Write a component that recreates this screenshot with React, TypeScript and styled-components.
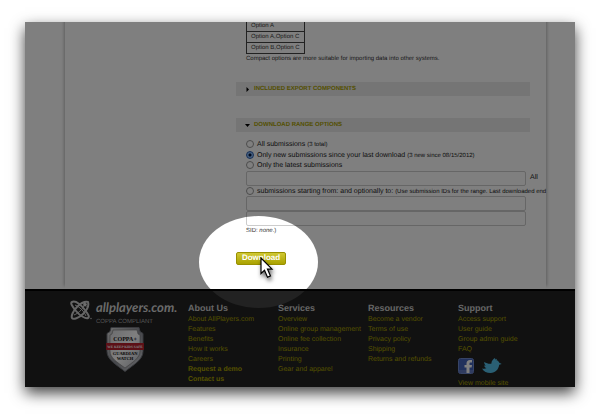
import React from "react";
import styled, { createGlobalStyle } from "styled-components";

const GlobalStyle = createGlobalStyle`
  * { box-sizing: border-box; }
  body {
    margin: 0;
    background: #fff;
    color: #333;
    font: 7px/10px "Liberation Sans", Arial, sans-serif;
    text-rendering: geometricPrecision;
  }
`;

const Stage = styled.div`
  padding: 22px 25px 33px;
`;

const Screen = styled.div`
  position: relative;
  overflow: hidden;
  background: #fff;
  box-shadow: 0 6px 14px 0 rgba(0, 0, 0, 0.75);
`;

const Page = styled.main`
  margin: 0 29px 0 40px;
  padding: 0 16px 24px 171px;
  box-shadow: 0 -4px 3px 1px rgba(0, 0, 0, 0.25);
`;

const Body = styled.div`
  padding: 0 0 0 10px;
`;

const OptionTable = styled.table`
  border-collapse: collapse;
  color: #333;
  font-size: 6px;
  line-height: 8px;
`;

const OptionCell = styled.td<{ $first?: boolean }>`
  height: ${(p) => (p.$first ? "9px" : "11px")};
  padding: 0 4px;
  border: 1px solid #444;
  border-top-width: ${(p) => (p.$first ? "0" : "1px")};
  white-space: nowrap;
`;

const Hint = styled.p`
  margin: 0;
  font-size: 6px;
  line-height: 10px;
`;

const SectionToggle = styled.button<{ $gap: number }>`
  display: flex;
  align-items: center;
  gap: 4px;
  width: 100%;
  height: 14px;
  margin-top: ${(p) => p.$gap}px;
  padding: 1px 9px 0;
  border: 0;
  background: #eaeaea;
  color: #a8a000;
  font: bold 6px/14px "Liberation Sans", Arial, sans-serif;
  text-rendering: inherit;
  text-transform: uppercase;
`;

const Options = styled.div`
  display: flex;
  flex-direction: column;
  padding: 7px 0 0 10px;
`;

const Choice = styled.div<{ $tall?: boolean }>`
  display: flex;
  align-items: center;
  gap: 3px;
  height: ${(p) => (p.$tall ? "10px" : "11px")};
  color: #222;
  white-space: nowrap;
`;

const ChoiceLabel = styled.label`
  padding-top: 2px;
`;

const Radio = styled.input`
  appearance: none;
  flex: none;
  width: 8px;
  height: 8px;
  margin: 0;
  border: 1px solid #999;
  border-radius: 50%;
  background: #fff;
  &:checked {
    border-color: #2d5fae;
    background: radial-gradient(circle, #00143c 0 1px, #8fc0ff 2px 3px);
  }
`;

const Note = styled.small`
  font-size: 6px;
`;

const FieldRow = styled.div`
  display: flex;
  align-items: center;
  gap: 4px;
  margin-right: -8px;
`;

const Field = styled.input<{ $inset?: boolean }>`
  display: block;
  flex: 1;
  min-width: 0;
  height: 15px;
  margin-right: ${(p) => (p.$inset ? "4px" : "0")};
  padding: 0 3px;
  border: 1px solid #ccc;
  border-radius: 2px;
  background: #fff;
  font: inherit;
`;

const Stack = styled.div`
  display: grid;
`;

const AfterField = styled.label`
  width: 8px;
  color: #222;
`;

const Download = styled.button`
  display: block;
  width: 50px;
  height: 13px;
  margin-top: 16px;
  padding: 0;
  border: 1px solid #989000;
  border-radius: 2px;
  background: linear-gradient(#d0c832, #aaa200);
  color: #fff;
  font: bold 8px/10px "Liberation Sans", Arial, sans-serif;
  text-rendering: inherit;
`;

const Footer = styled.footer`
  display: grid;
  grid-template-columns: 118px repeat(3, 90px) 1fr;
  height: 98px;
  padding: 9px 0 0 45px;
  border-top: 2px solid #000;
  background: #222;
`;

const Brand = styled.div`
  display: grid;
  grid-template-columns: 26px 1fr;
  align-content: start;
`;

const BrandName = styled.div`
  height: 17px;
  color: #d4d4d4;
  font: italic bold 13px/14px Lato, "Open Sans", sans-serif;
  white-space: nowrap;
`;

const Compliance = styled.div`
  height: 10px;
  color: #aaa;
  font-size: 6px;
  white-space: nowrap;
`;

const BrandText = styled.div`
  display: grid;
`;

const Badge = styled.svg`
  display: block;
  margin-left: 10px;
`;

const Heading = styled.h2`
  margin: 1px 0 0;
  color: #ccc;
  font-size: 9px;
  line-height: 14px;
`;

const Links = styled.ul`
  margin: 0;
  padding: 0;
  list-style: none;
`;

const FooterLink = styled.a<{ $strong?: boolean }>`
  display: block;
  color: #a8a000;
  font-weight: ${(p) => (p.$strong ? "bold" : "normal")};
  text-decoration: none;
  white-space: nowrap;
`;

const Social = styled.div`
  display: flex;
  gap: 8px;
  height: 24px;
  padding-top: 3px;
`;

const Spotlight = styled.div`
  position: absolute;
  left: 174px;
  top: 194px;
  width: 119px;
  height: 92px;
  border-radius: 50%;
  box-shadow: 0 0 0 2000px rgba(0, 0, 0, 0.5);
  pointer-events: none;
`;

const Pointer = styled.svg`
  position: absolute;
  left: 235px;
  top: 235px;
  filter: drop-shadow(1px 3px 2px rgba(0, 0, 0, 0.6));
  pointer-events: none;
`;

const columns = [
  {
    title: "About Us",
    links: ["About AllPlayers.com", "Features", "Benefits", "How it works", "Careers"],
    strong: ["Request a demo", "Contact us"],
  },
  {
    title: "Services",
    links: ["Overview", "Online group management", "Online fee collection", "Insurance", "Printing", "Gear and apparel"],
  },
  {
    title: "Resources",
    links: ["Become a vendor", "Terms of use", "Privacy policy", "Shipping", "Returns and refunds"],
  },
  { title: "Support", links: ["Access support", "User guide", "Group admin guide", "FAQ"], social: true },
];

function Triangle({ open }: { open?: boolean }) {
  return (
    <svg width="5" height="5" viewBox="0 0 5 5" aria-hidden="true">
      <path d={open ? "M0 1h5L2.5 4z" : "M1.5 0v5L4 2.5z"} fill="#000" />
    </svg>
  );
}

function Atom() {
  return (
    <svg width="22" height="20" viewBox="0 0 22 20" fill="none" stroke="#ccc" aria-hidden="true">
      <path d="M2 2C6 0 12 6 15 10s5 7 3 8-8-2-12-7S0 3 2 2z" strokeWidth="2" />
      <path d="M18 2c1 3-1 8-5 12S3 20 2 18s1-7 5-11S14 1 18 2z" strokeWidth="2" />
      <path d="M4 15C9 13 14 8 15 3M5 5c5 2 9 6 11 11" strokeWidth="1" />
      <path d="M12 3l2 .4L15 1.500l.8 2 2 .2-1.500 1.400.3 2-1.700-1-1.700.8.4-1.900z" fill="#ddd" stroke="none" />
      <circle cx="21" cy="18.500" r=".7" fill="#ccc" stroke="none" />
    </svg>
  );
}

function CoppaBadge() {
  return (
    <Badge width="38" height="45" viewBox="0 0 38 45" role="img" aria-label="COPPA+ Guardian Watch">
      <defs>
        <linearGradient id="steel" x1="0" y1="0" x2="1" y2="1">
          <stop offset="0" stopColor="#ddd" />
          <stop offset=".5" stopColor="#8b8e96" />
          <stop offset="1" stopColor="#d8d8dc" />
        </linearGradient>
        <linearGradient id="face" x1="0" y1="0" x2="1" y2="1">
          <stop offset="0" stopColor="#d8dade" />
          <stop offset=".5" stopColor="#fff" />
          <stop offset="1" stopColor="#b9bcc4" />
        </linearGradient>
      </defs>
      <path d="M5 .5h28l1 4 3 2v18c0 8-9 13-18 20C10 37.500 1 32.500 1 24.500v-18l3-2z" fill="url(#steel)" stroke="#70737b" />
      <path d="M7 3h24l1 4 2 1v16c0 7-7 11-15 17C11 35 4 31 4 24V8l2-1z" fill="url(#face)" stroke="#777" strokeWidth=".6" />
      <rect x="0" y="16" width="38" height="7" fill="#b8202c" />
      <g fontFamily="Liberation Serif, serif" fontWeight="bold" textAnchor="middle" fill="#111">
        <text x="19" y="13.500" fontSize="6">COPPA+</text>
        <text x="19" y="21" fontSize="3.500" fill="#fff">WE KEEP KIDS SAFE</text>
        <text x="19" y="28" fontSize="4.500">GUARDIAN</text>
        <text x="19" y="33" fontSize="4.500">WATCH</text>
      </g>
    </Badge>
  );
}

function Facebook() {
  return (
    <svg width="16" height="16" viewBox="0 0 16 16" aria-hidden="true">
      <rect x=".5" y=".5" width="15" height="15" rx="2" fill="#4262b8" stroke="#6f88cc" />
      <path d="M1 12h14v3H1z" fill="#6079c0" />
      <path d="M8.500 15V9.500H6.500V7h2V5.500C8.500 3.300 9.800 2 12 2h2v2.500h-1.500c-.8 0-1 .4-1 1.200V7H14l-.4 2.500h-2.100V15z" fill="#fff" />
    </svg>
  );
}

function Twitter() {
  return (
    <svg width="20" height="16" viewBox="0 0 20 16" aria-hidden="true">
      <path
        d="M0 10.500c2 .6 3.500.3 4.500-.5C3 9.500 2.300 8.500 2.200 7.400c.6.3 1.200.2 1.600 0C2.500 6.500 2 5.300 2.300 4c2.300 1.500 4.500 2 7 1.700C9.500 2.500 11.500.8 13 0l.3 1.500L15 .7l-.5 1.500c1.500.3 2.400 1.300 2.800 2.500l2.400 1.200-2.500.9C16.500 11.500 13.500 15 8.500 15 5 15 1.500 13.500 0 10.500z"
        fill="#55bfe8"
      />
    </svg>
  );
}

export default function App() {
  return (
    <>
      <GlobalStyle />
      <Stage>
        <Screen>
          <Page>
            <Body>
              <OptionTable>
                <tbody>
                  <tr><OptionCell $first>Option A</OptionCell></tr>
                  <tr><OptionCell>Option A,Option C</OptionCell></tr>
                  <tr><OptionCell>Option B,Option C</OptionCell></tr>
                </tbody>
              </OptionTable>
              <Hint>Compact options are more suitable for importing data into other systems.</Hint>
            </Body>
            <SectionToggle type="button" $gap={18} aria-expanded="false">
              <Triangle />Included export components
            </SectionToggle>
            <SectionToggle type="button" $gap={22} aria-expanded="true">
              <Triangle open />Download range options
            </SectionToggle>
            <Options>
              <Choice>
                <Radio type="radio" name="range" id="all" />
                <ChoiceLabel htmlFor="all">All submissions <Note>(3 total)</Note></ChoiceLabel>
              </Choice>
              <Choice $tall>
                <Radio type="radio" name="range" id="new" defaultChecked />
                <ChoiceLabel htmlFor="new">Only new submissions since your last download <Note>(3 new since 08/15/2012)</Note></ChoiceLabel>
              </Choice>
              <Choice>
                <Radio type="radio" name="range" id="latest" />
                <ChoiceLabel htmlFor="latest">Only the latest submissions</ChoiceLabel>
              </Choice>
              <FieldRow>
                <Field id="count" type="text" />
                <AfterField htmlFor="count">All</AfterField>
              </FieldRow>
              <Choice $tall>
                <Radio type="radio" name="range" id="span" />
                <ChoiceLabel htmlFor="span">submissions starting from: and optionally to: <Note>(Use submission IDs for the range. Last downloaded end</Note></ChoiceLabel>
              </Choice>
              <Stack>
                <Field $inset type="text" aria-label="Starting from" />
                <Field $inset type="text" aria-label="Optionally to" />
              </Stack>
              <Hint>SID: <em>none</em>.)</Hint>
            </Options>
            <Download type="button">Download</Download>
          </Page>
          <Footer>
            <Brand>
              <Atom />
              <BrandText>
                <BrandName>allplayers.com.</BrandName>
                <Compliance>COPPA COMPLIANT</Compliance>
                <CoppaBadge />
              </BrandText>
            </Brand>
            {columns.map((column) => (
              <section key={column.title}>
                <Heading>{column.title}</Heading>
                <Links>
                  {column.links.map((text) => (
                    <li key={text}><FooterLink href="#">{text}</FooterLink></li>
                  ))}
                  {column.strong?.map((text) => (
                    <li key={text}><FooterLink href="#" $strong>{text}</FooterLink></li>
                  ))}
                </Links>
                {column.social && (
                  <>
                    <Social>
                      <a href="#" aria-label="Facebook"><Facebook /></a>
                      <a href="#" aria-label="Twitter"><Twitter /></a>
                    </Social>
                    <FooterLink href="#">View mobile site</FooterLink>
                  </>
                )}
              </section>
            ))}
          </Footer>
          <Spotlight />
          <Pointer width="16" height="23" viewBox="0 0 16 23" aria-hidden="true">
            <path d="M1 1v15.500l3.500-3.300 3 7 3-1.300-3-6.700H12z" fill="#fff" stroke="#000" strokeWidth="1.200" />
          </Pointer>
        </Screen>
      </Stage>
    </>
  );
}
